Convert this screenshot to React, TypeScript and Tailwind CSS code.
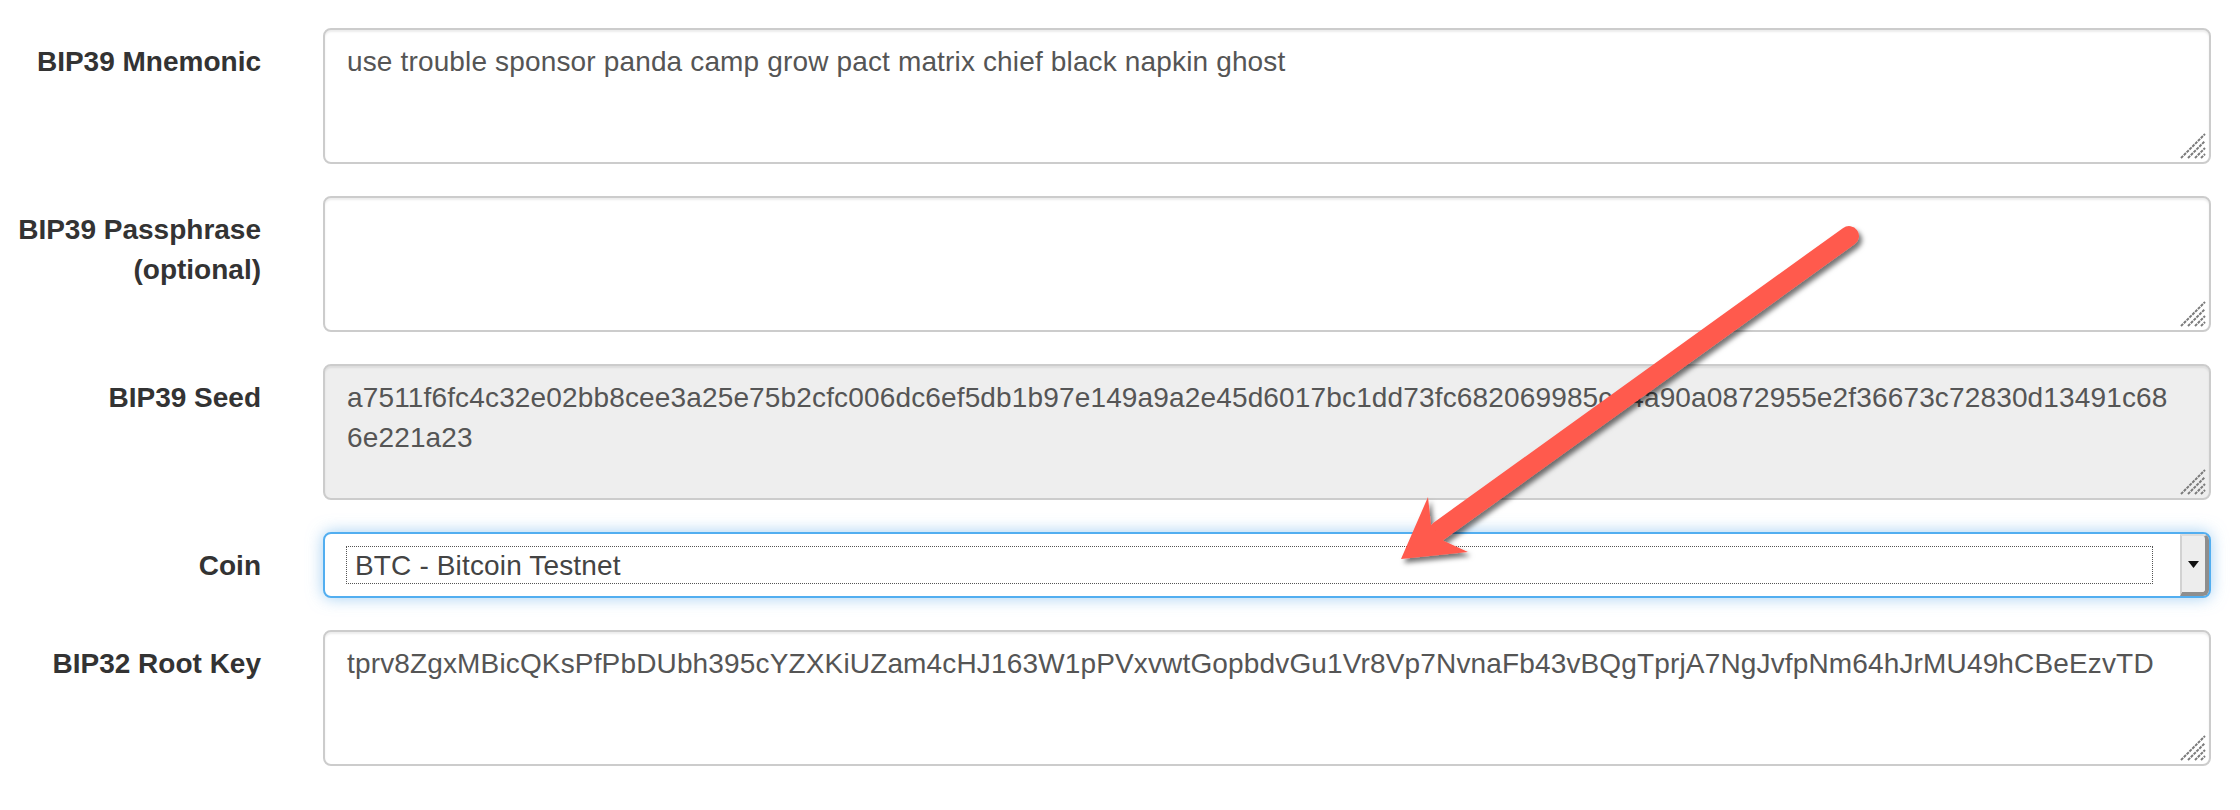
import React from "react"

const mnemonic = "use trouble sponsor panda camp grow pact matrix chief black napkin ghost"
const seedLines = [
  "a7511f6fc4c32e02bb8cee3a25e75b2cfc006dc6ef5db1b97e149a9a2e45d6017bc1dd73fc682069985c44a90a0872955e2f36673c72830d13491c68",
  "6e221a23",
]
const rootKey = "tprv8ZgxMBicQKsPfPbDUbh395cYZXKiUZam4cHJ163W1pPVxvwtGopbdvGu1Vr8Vp7NvnaFb43vBQgTprjA7NgJvfpNm64hJrMU49hCBeEzvTD"

function ResizeGrip() {
  return (
    <svg className="absolute right-[3px] bottom-[3px]" width="26" height="26" viewBox="0 0 26 26">
      <g stroke="#7a7a7a" strokeWidth="2" strokeDasharray="3 1">
        <line x1="1" y1="25" x2="25" y2="1" />
        <line x1="8" y1="25" x2="25" y2="8" />
        <line x1="15" y1="25" x2="25" y2="15" />
        <line x1="21" y1="25" x2="25" y2="21" />
      </g>
    </svg>
  )
}

function Label({ children }: { children: React.ReactNode }) {
  return (
    <div className="w-[323px] shrink-0 pl-[15px] pr-[62px] pt-[14px] text-right font-bold text-[28px] leading-[40px] text-[#333]">
      {children}
    </div>
  )
}

function TextBox({ lines, readOnly }: { lines: string[]; readOnly?: boolean }) {
  return (
    <div
      className={
        "relative h-[136px] flex-1 rounded-[8px] border-2 border-[#cccccc] px-[22px] py-[12px] text-[28px] leading-[40px] tracking-[0.15px] text-[#555] shadow-[inset_0_2px_2px_rgba(0,0,0,0.075)] " +
        (readOnly ? "bg-[#eeeeee]" : "bg-white")
      }
    >
      {lines.map((l, i) => (
        <div key={i} className="whitespace-nowrap">{l}</div>
      ))}
      <ResizeGrip />
    </div>
  )
}

function CoinSelect() {
  return (
    <div className="flex h-[66px] flex-1 items-stretch rounded-[8px] border-2 border-[#52aef0] bg-white shadow-[0_0_16px_rgba(102,175,233,0.6)]">
      <div className="flex flex-1 items-center pl-[21px] pr-[27px]">
        <div className="flex h-[38px] flex-1 items-center border border-dotted border-[#555] pl-[8px] pt-[2px] text-[28px] leading-[38px] tracking-[0.15px] text-[#444]">
          BTC - Bitcoin Testnet
        </div>
      </div>
      <div className="flex w-[29px] items-center justify-center rounded-tr-[6px] rounded-br-[6px] border-t-2 border-l-2 border-r-[4px] border-b-[4px] border-t-[#dcdcdc] border-l-[#d2d2d2] border-r-[#8e8e8e] border-b-[#8e8e8e] bg-[#ededed]">
        <svg width="11" height="7" viewBox="0 0 11 7">
          <path d="M0 0 L11 0 L5.5 7 Z" fill="#111" />
        </svg>
      </div>
    </div>
  )
}

function Arrow() {
  return (
    <svg className="pointer-events-none absolute left-0 top-0" width="2240" height="810" viewBox="0 0 2240 810">
      <defs>
        <filter id="arrowShadow" x="-20%" y="-20%" width="140%" height="140%">
          <feDropShadow dx="3" dy="4" stdDeviation="2.5" floodColor="#000" floodOpacity="0.55" />
        </filter>
      </defs>
      <g filter="url(#arrowShadow)" fill="#ff5a4d">
        <path d="M1849 236 L1439 531" stroke="#ff5a4d" strokeWidth="20" strokeLinecap="round" />
        <polygon points="1401,559 1428,497 1431,525 1444,541 1468,552" />
      </g>
    </svg>
  )
}

export default function App() {
  return (
    <div className="relative h-[810px] w-[2240px] overflow-hidden bg-white pt-[28px] pr-[29px] font-['Liberation_Sans',Arial,sans-serif]">
      <div className="flex flex-col gap-[32px]">
        <div className="flex">
          <Label>BIP39 Mnemonic</Label>
          <TextBox lines={[mnemonic]} />
        </div>
        <div className="flex">
          <Label>BIP39 Passphrase (optional)</Label>
          <TextBox lines={[]} />
        </div>
        <div className="flex">
          <Label>BIP39 Seed</Label>
          <TextBox lines={seedLines} readOnly />
        </div>
        <div className="flex">
          <Label>Coin</Label>
          <CoinSelect />
        </div>
        <div className="flex">
          <Label>BIP32 Root Key</Label>
          <TextBox lines={[rootKey]} />
        </div>
      </div>
      <Arrow />
    </div>
  )
}
